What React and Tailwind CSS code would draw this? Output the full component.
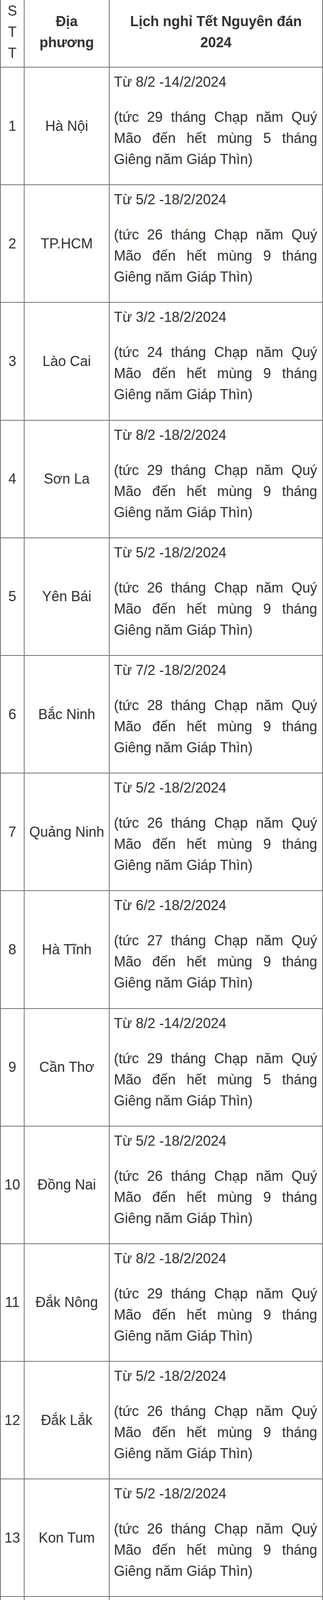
const rows = [
  ["1", "Hà Nội", "8/2 -14/2/2024", "29", "5"],
  ["2", "TP.HCM", "5/2 -18/2/2024", "26", "9"],
  ["3", "Lào Cai", "3/2 -18/2/2024", "24", "9"],
  ["4", "Sơn La", "8/2 -18/2/2024", "29", "9"],
  ["5", "Yên Bái", "5/2 -18/2/2024", "26", "9"],
  ["6", "Bắc Ninh", "7/2 -18/2/2024", "28", "9"],
  ["7", "Quảng Ninh", "5/2 -18/2/2024", "26", "9"],
  ["8", "Hà Tĩnh", "6/2 -18/2/2024", "27", "9"],
  ["9", "Cần Thơ", "8/2 -14/2/2024", "29", "5"],
  ["10", "Đồng Nai", "5/2 -18/2/2024", "26", "9"],
  ["11", "Đắk Nông", "8/2 -18/2/2024", "29", "9"],
  ["12", "Đắk Lắk", "5/2 -18/2/2024", "26", "9"],
  ["13", "Kon Tum", "5/2 -18/2/2024", "26", "9"],
  ["14", "Bà Rịa - Vũng Tàu", "5/2 -18/2/2024", "26", "9"],
  ["15", "Long An", "4/2 -14/2/2024", "25", "5"],
  ["16", "Trà Vinh", "5/2 -18/2/2024", "26", "9"],
  ["17", "Gia Lai", "5/2 -18/2/2024", "26", "9"],
  ["18", "Đà Nẵng", "5/2 -18/2/2024", "26", "9"],
  ["19", "An Giang", "5/2 -18/2/2024", "26", "9"],
  ["20", "Đồng Tháp", "8/2 -17/2/2024", "29", "8"],
];

export default function App() {
  return (
    <div className="w-[828px] bg-white font-[family-name:'Liberation_Sans',Arial,sans-serif] text-[36px] leading-[54px] text-[#333]">
      {/* grid lines come from the gap showing the grey background */}
      <div className="grid grid-cols-[59px_216px_545px] gap-[2px] bg-[#707070] px-[2px] pb-[2px]">
        {/* header, top border cut off */}
        <div className="flex h-[171px] flex-col items-center bg-white pt-[1px] text-center">
          <span>S</span>
          <span>T</span>
          <span>T</span>
        </div>
        <div className="flex h-[171px] items-center justify-center bg-white px-2 pt-[1px] pb-[8px] text-center font-bold">
          Địa phương
        </div>
        <div className="flex h-[171px] items-center justify-center bg-white px-3 pt-[1px] pb-[8px] text-center font-bold">
          Lịch nghỉ Tết Nguyên đán 2024
        </div>

        {rows.map(([stt, place, range, day, end]) => (
          <div key={stt} className="contents">
            <div className="flex h-[299.2px] items-center justify-center bg-white text-center">{stt}</div>
            <div className="flex h-[299.2px] items-center justify-center bg-white px-2 text-center">{place}</div>
            <div className="h-[299.2px] bg-white pl-[11px] pr-[13px] pt-[10px]">
              <p className="mb-9">Từ {range}</p>
              <p className="text-justify">
                (tức {day} tháng Chạp năm Quý Mão đến hết mùng {end} tháng Giêng năm Giáp Thìn)
              </p>
            </div>
          </div>
        ))}
      </div>
    </div>
  );
}
